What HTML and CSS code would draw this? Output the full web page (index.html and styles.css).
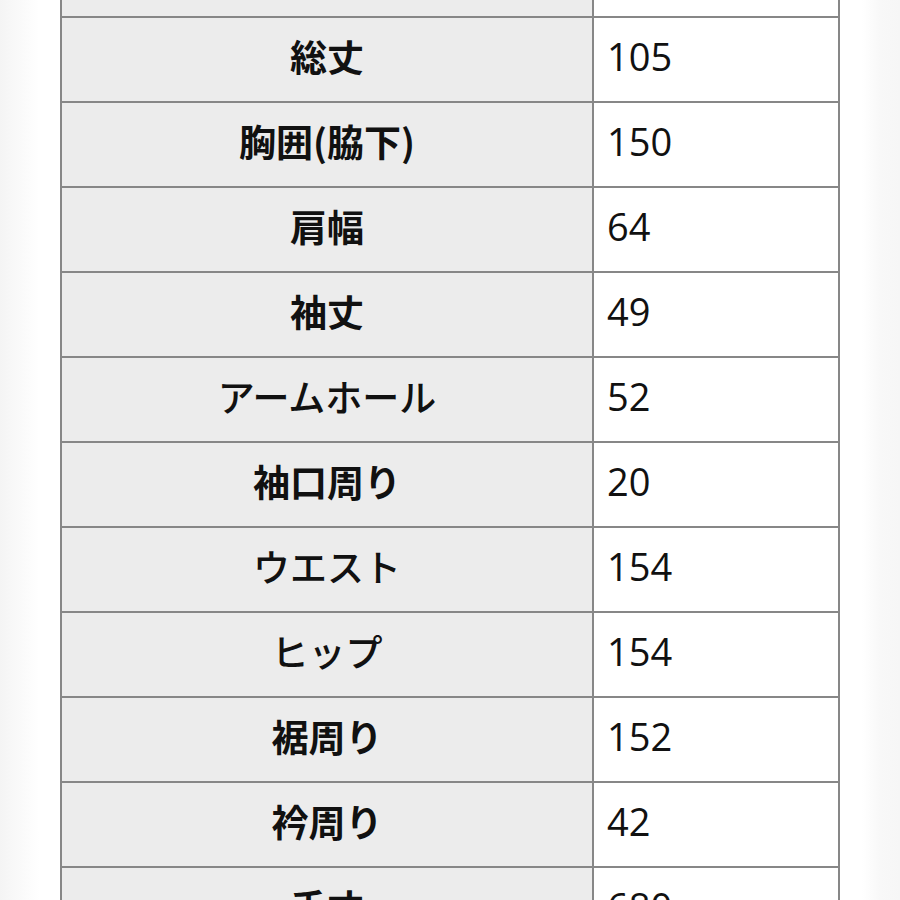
FILE: index.html
```html
<!DOCTYPE html>
<html lang="ja">
<head>
<meta charset="utf-8">
<link rel="stylesheet" href="styles.css">
</head>
<body>
<div class="card">
<table class="size-table">
<tr><th>着丈</th><td>0</td></tr>
<tr><th>総丈</th><td>105</td></tr>
<tr><th>胸囲(脇下)</th><td>150</td></tr>
<tr><th>肩幅</th><td>64</td></tr>
<tr><th>袖丈</th><td>49</td></tr>
<tr><th class="kana">アームホール</th><td>52</td></tr>
<tr><th>袖口周り</th><td>20</td></tr>
<tr><th class="kana">ウエスト</th><td>154</td></tr>
<tr><th class="kana">ヒップ</th><td>154</td></tr>
<tr><th>裾周り</th><td>152</td></tr>
<tr><th>衿周り</th><td>42</td></tr>
<tr><th>手丈</th><td>680</td></tr>
</table>
</div>
</body>
</html>
```

FILE: styles.css
```css
html, body {
  margin: 0;
  padding: 0;
  background: #ffffff;
  height: 100%;
  overflow: hidden;
}
body {
  background: linear-gradient(to right, #f4f4f4 0px, #fbfbfb 25px, #ffffff 40px, #ffffff 862px, #f8f8f8 880px, #f6f6f6 900px);
}
.card {
  margin: 0 38px;
  padding: 0 22px;
  background: #ffffff;
  height: 100%;
}
.size-table {
  border-collapse: collapse;
  width: 780px;
  margin-top: -69px;
  color: #111111;
}
.size-table th,
.size-table td {
  border: 2px solid #878787;
  height: 77px;
  padding: 0 0 6px 0;
  line-height: 77px;
  vertical-align: middle;
}
.size-table th {
  width: 530px;
  background: #ececec;
  font-family: "Noto Sans CJK JP", "Noto Sans", sans-serif;
  font-weight: 700;
  font-size: 37px;
  text-align: center;
}
.size-table th.kana {
  font-weight: 500;
}
.size-table td {
  background: #ffffff;
  font-family: "Open Sans", "Noto Sans", sans-serif;
  font-size: 38px;
  text-align: left;
  padding-left: 13px;
}
```
